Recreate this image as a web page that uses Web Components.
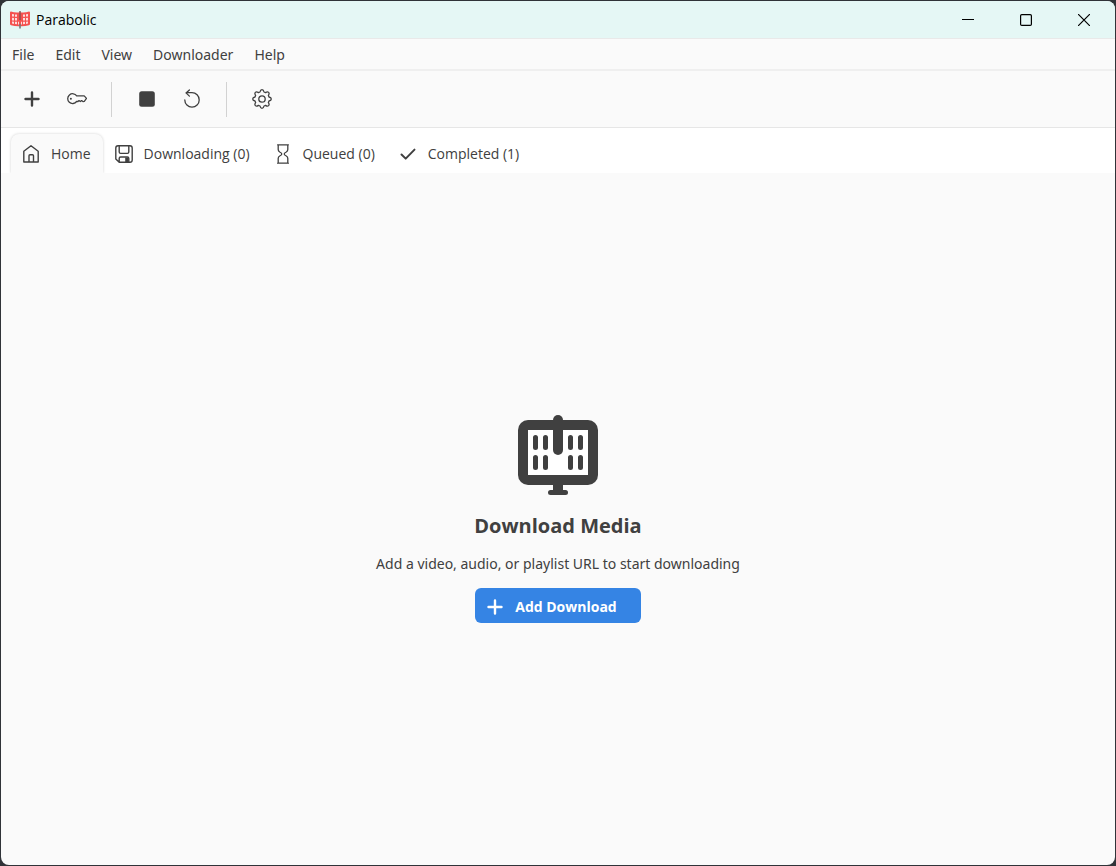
<!DOCTYPE html>
<html lang="en">
<head>
<meta charset="utf-8">
<title>Parabolic</title>
<style>
  body { margin: 0; background: #303338; color: #404040; font: 14px/20px "Open Sans", "Noto Sans", sans-serif; }
</style>
</head>
<body>
<app-window>
  <title-bar slot="title">Parabolic</title-bar>
  <menu-bar slot="menu">
    <menu-entry>File</menu-entry>
    <menu-entry>Edit</menu-entry>
    <menu-entry>View</menu-entry>
    <menu-entry>Downloader</menu-entry>
    <menu-entry>Help</menu-entry>
  </menu-bar>
  <tool-bar slot="tools">
    <tool-button icon="add" label="Add Download"></tool-button>
    <tool-button icon="key" label="Keyring"></tool-button>
    <tool-separator></tool-separator>
    <tool-button icon="stop" label="Stop All Downloads"></tool-button>
    <tool-button icon="retry" label="Retry Failed Downloads"></tool-button>
    <tool-separator></tool-separator>
    <tool-button icon="gear" label="Settings"></tool-button>
  </tool-bar>
  <tab-strip slot="tabs">
    <tab-item icon="home" selected>Home</tab-item>
    <tab-item icon="save">Downloading (0)</tab-item>
    <tab-item icon="hourglass">Queued (0)</tab-item>
    <tab-item icon="check">Completed (1)</tab-item>
  </tab-strip>
  <status-page>
    <span slot="heading">Download Media</span>
    <span slot="description">Add a video, audio, or playlist URL to start downloading</span>
    <span slot="action">Add Download</span>
  </status-page>
</app-window>
<script>
const ICONS = {
  add: '<path d="M10 3.500v13M3.500 10h13" stroke-width="2.4"/>',
  key: '<path d="M9.700 6.900H17.200l2.300 2.500-2.200 2.900-1.400.3-1.300-1-1.300 1-1.300-1-1 .9H9.600A4.900 4.900 0 1 1 9.700 6.900Z" stroke-width="1.3"/><circle cx="3.900" cy="9.700" r="1" fill="currentColor" stroke="none"/>',
  stop: '<rect x="2.2" y="2.2" width="15.6" height="15.6" rx="2.5" fill="currentColor" stroke="none"/>',
  retry: '<path d="M2.800 10.900a7.200 7.200 0 1 0 7.200-7.200H4.200M7.400.9 4 3.900l3.400 3.200" stroke-width="1.3"/>',
  gear: '<path d="M8 3Q8.400.7 10 .7T12 3l1.600.6q1.900-1.300 3-.2t-.2 3L17 8q2.300.4 2.300 2T17 12l-.6 1.600q1.300 1.900.2 3t-3-.2L12 17q-.4 2.300-2 2.300T8 17l-1.600-.6q-1.900 1.300-3 .2t.2-3L3 12Q.7 11.600.7 10T3 8l.6-1.600q-1.300-1.900-.2-3t3 .2Z" stroke-width="1.3"/><circle cx="10" cy="10" r="3.2" stroke-width="1.3"/>',
  home: '<path d="M2.800 18V7.300L10 1.700l7.200 5.600V18H12.500v-6.200q0-1-1-1H9q-1 0-1 1V18ZM8 18h4.500" stroke-width="1.4"/>',
  save: '<path d="M4 1.800h12q2.200 0 2.200 2.200v12q0 2.200-2.200 2.200H5.200L1.800 15V4Q1.800 1.800 4 1.800ZM5.200 2v6q0 1.400 1.400 1.400h6.800q1.400 0 1.400-1.400V2M5.200 18v-3.600q0-1.400 1.400-1.400h6.800q1.400 0 1.400 1.400V18" stroke-width="1.4"/><path d="M11.200 13.500h3.300V18h-3.300Z" fill="currentColor" stroke="none"/>',
  hourglass: '<path d="M4.600.8h10.800M4.600 19.200h10.800M5.200 1v4.600q0 1.500 1.500 2.400Q8.800 9 8.800 10t-2.100 2q-1.500.9-1.500 2.400V19M14.800 1v4.600q0 1.500-1.500 2.400Q11.200 9 11.200 10t2.100 2q1.500.9 1.500 2.400V19" stroke-width="1.3"/>',
  check: '<path d="m3.500 10.500 4.200 4.100 8.800-9" stroke-width="2"/>'
};
const svg = name => `<svg viewBox="0 0 20 20" width="20" height="20" fill="none" stroke="currentColor" stroke-linecap="round" stroke-linejoin="round" aria-hidden="true">${ICONS[name]}</svg>`;
const RESET = '*,:host{box-sizing:border-box}button{margin:0;padding:0;border:0;background:none;color:inherit;font:inherit;white-space:nowrap}svg{display:block;flex:none}';

function define(tag, render) {
  customElements.define(tag, class extends HTMLElement {
    connectedCallback() {
      if (this.shadowRoot) return;
      const template = document.createElement('template');
      template.innerHTML = render(this);
      this.attachShadow({ mode: 'open' }).append(template.content.cloneNode(true));
    }
  });
}

define('app-window', () => `<style>${RESET}
  :host{display:block;padding:1px}
  .frame{display:flex;flex-direction:column;min-height:calc(100vh - 2px);background:#fafafa;border-radius:8px;overflow:hidden}
  main{flex:1;display:flex;align-items:center;justify-content:center}
  </style><div class="frame"><slot name="title"></slot><slot name="menu"></slot><slot name="tools"></slot><slot name="tabs"></slot><main><slot></slot></main></div>`);

define('title-bar', () => `<style>${RESET}
  :host{display:flex;align-items:center;height:38px;padding-left:9px;background:#e5f7f5;color:#000;border-bottom:1px solid #e9e9e9}
  .name{flex:1;margin-left:6px}
  .caption{display:flex;height:100%;padding-right:2px}
  .caption button{width:58px;display:flex;align-items:center;justify-content:center}
  </style>
  <svg width="20" height="20" viewBox="0 0 20 20" aria-hidden="true"><path d="M1 1.500Q5 3 10 2.300 15 3 19 1.500q1 0 1 1V14q0 1-1 1.200Q14 16.600 10 16.200 6 16.600 1 15.200q-1-.2-1-1.200V2.500q0-1 1-1Z" fill="#f5514f"/><path d="M2 4v2.600h2V4.300Zm3 .4v2.400h2V4.600Zm8 .2v2.200h2V4.400Zm3-.3v2.300h2V4ZM2 7.800v2.600h2V7.900Zm3 .2v2.500h2V8Zm8 0v2.500h2V8Zm3-.1v2.500h2V7.800ZM2 11.600v1.900l2 .4v-2.200Zm3 .1v2.400l2 .2v-2.500Zm3 .1v2.600h1v-2.600Zm3 0v2.600h1v-2.600Zm2 0v2.500l2-.2v-2.400Zm3-.1v2.200l2-.4v-1.900Z" fill="#fff" opacity=".8"/><path d="M9.300 1h1.400v9H9.300Z" fill="#85504f"/><path d="M9.200 14h1.600v4.500H9.200Z" fill="#777"/></svg>
  <span class="name"><slot></slot></span>
  <div class="caption">
    <button aria-label="Minimize"><svg width="12" height="12" stroke="#000"><path d="M0 5.500h12"/></svg></button>
    <button aria-label="Maximize"><svg width="12" height="12" fill="none" stroke="#000"><rect x=".6" y=".6" width="10.8" height="10.8" rx="1.2" stroke-width="1.2"/></svg></button>
    <button aria-label="Close"><svg width="12" height="12" stroke="#000"><path d="m0 0 12 12M12 0 0 12" stroke-width="1.2"/></svg></button>
  </div>`);

define('menu-bar', () => `<style>:host{display:flex;align-items:center;gap:1px;box-sizing:border-box;height:32px;padding:2px 0 0 1px;border-bottom:2px solid #efefef;font-family:"Noto Sans","Open Sans",sans-serif}</style><slot></slot>`);
define('menu-entry', () => `<style>${RESET}:host{display:block}button{padding:0 10px}</style><button><slot></slot></button>`);

define('tool-bar', () => `<style>:host{display:flex;align-items:center;box-sizing:border-box;height:57px;padding-left:8px;border-bottom:1px solid #e6e6e6}</style><slot></slot>`);
define('tool-button', el => `<style>${RESET}:host{display:block}button{display:flex;align-items:center;justify-content:center;width:45px;height:36px}</style><button aria-label="${el.getAttribute('label')}">${svg(el.getAttribute('icon'))}</button>`);
define('tool-separator', () => `<style>:host{display:block;width:1px;height:35px;margin:0 12px;background:#d2d2d2}</style>`);

define('tab-strip', () => `<style>:host{display:flex;align-items:flex-end;gap:1px;box-sizing:border-box;height:45px;padding-left:10px;background:#fff}</style><slot></slot>`);
define('tab-item', el => `<style>${RESET}
  :host{display:block}
  button{display:flex;align-items:center;gap:10px;height:39px;padding:0 12px 0 10px;border-radius:8px 8px 0 0}
  :host([selected]) button{background:#fafafa;box-shadow:0 0 3px rgba(0,0,0,.18)}
  :host([selected]){overflow:hidden;padding:4px 4px 0;margin:0 -4px}
  </style><button role="tab" aria-selected="${el.hasAttribute('selected')}">${svg(el.getAttribute('icon'))}<span><slot></slot></span></button>`);

define('status-page', () => `<style>${RESET}
  :host{display:flex;flex-direction:column;align-items:center;text-align:center}
  h1{margin:17px 0 0;font-size:20px;line-height:28px;font-weight:700}
  p{margin:14px 0 0;font-family:"Noto Sans","Open Sans",sans-serif}
  button{display:flex;align-items:center;gap:10px;height:35px;margin-top:14px;padding:2px 24px 0 10px;border-radius:6px;background:#3584e4;color:#fff;font-weight:700}
  </style>
  <svg width="80" height="80" viewBox="0 0 80 80" fill="#404040" aria-hidden="true">
    <rect y="5" width="80" height="65" rx="10"/><path d="M10 15h60v45H10Z" fill="#fff"/>
    <rect x="35" width="10" height="40" rx="5"/><path d="M35 68h10v8H35Z"/><rect x="30" y="75" width="20" height="5" rx="2.5"/>
    <path d="M17.500 22.500v10M27.500 22.500v10M52.500 22.500v10M62.500 22.500v10M17.500 42.500v10M27.500 42.500v10M52.500 42.500v10M62.500 42.500v10" stroke="#404040" stroke-width="5" stroke-linecap="round"/>
  </svg>
  <h1><slot name="heading"></slot></h1>
  <p><slot name="description"></slot></p>
  <button>${svg('add')}<slot name="action"></slot></button>`);
</script>
</body>
</html>
